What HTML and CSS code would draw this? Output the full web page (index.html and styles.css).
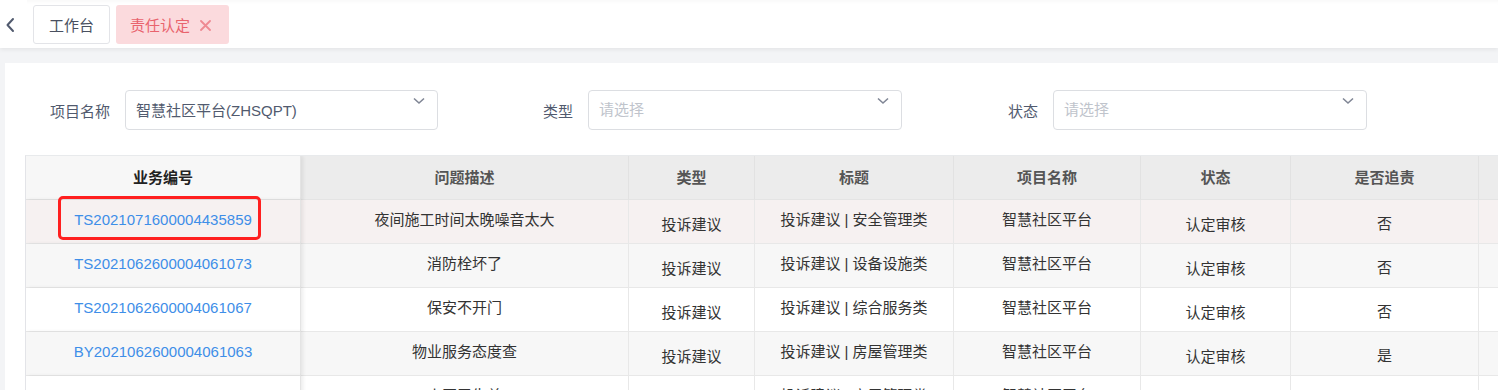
FILE: index.html
```html
<!DOCTYPE html>
<html lang="zh-CN">
<head>
<meta charset="utf-8">
<title>责任认定</title>
<link rel="stylesheet" href="styles.css">
</head>
<body>
<div class="topbar">
  <div class="back">
    <svg width="10" height="16" viewBox="0 0 10 16"><path d="M8 2 L2.5 8 L8 14" fill="none" stroke="#515a6e" stroke-width="2" stroke-linecap="round" stroke-linejoin="round"/></svg>
  </div>
  <div class="tabs">
    <div class="tab">工作台</div>
    <div class="tab active">责任认定<svg class="close" width="11" height="11" viewBox="0 0 11 11"><path d="M1 1 L10 10 M10 1 L1 10" stroke="#ee8a92" stroke-width="1.8" stroke-linecap="round"/></svg></div>
  </div>
</div>
<div class="main">
  <div class="card">
    <div class="filters">
      <div class="field f1">
        <span class="label">项目名称</span>
        <div class="select s1"><span class="value">智慧社区平台(ZHSQPT)</span><svg class="arrow" width="12" height="8" viewBox="0 0 12 8"><path d="M1 1.5 L6 6 L11 1.5" fill="none" stroke="#808695" stroke-width="1.6"/></svg></div>
      </div>
      <div class="field f2">
        <span class="label">类型</span>
        <div class="select s2"><span class="placeholder">请选择</span><svg class="arrow" width="12" height="8" viewBox="0 0 12 8"><path d="M1 1.5 L6 6 L11 1.5" fill="none" stroke="#808695" stroke-width="1.6"/></svg></div>
      </div>
      <div class="field f3">
        <span class="label">状态</span>
        <div class="select s3"><span class="placeholder">请选择</span><svg class="arrow" width="12" height="8" viewBox="0 0 12 8"><path d="M1 1.5 L6 6 L11 1.5" fill="none" stroke="#808695" stroke-width="1.6"/></svg></div>
      </div>
    </div>
    <div class="table-wrap">
      <table class="grid">
        <colgroup>
          <col class="c0"><col class="c1"><col class="c2"><col class="c3"><col class="c4"><col class="c5"><col class="c6"><col class="c7">
        </colgroup>
        <thead>
          <tr>
            <th class="fixed">业务编号</th>
            <th>问题描述</th>
            <th>类型</th>
            <th>标题</th>
            <th>项目名称</th>
            <th>状态</th>
            <th>是否追责</th>
            <th></th>
          </tr>
        </thead>
        <tbody>
          <tr class="hover">
            <td class="fixed"><a class="link">TS2021071600004435859</a><span class="mark"></span></td>
            <td class="up">夜间施工时间太晚噪音太大</td>
            <td class="down">投诉建议</td>
            <td class="up">投诉建议 | 安全管理类</td>
            <td class="up">智慧社区平台</td>
            <td class="down">认定审核</td>
            <td class="mid">否</td>
            <td></td>
          </tr>
          <tr class="stripe">
            <td class="fixed"><a class="link">TS2021062600004061073</a></td>
            <td class="up">消防栓坏了</td>
            <td class="down">投诉建议</td>
            <td class="up">投诉建议 | 设备设施类</td>
            <td class="up">智慧社区平台</td>
            <td class="down">认定审核</td>
            <td class="mid">否</td>
            <td></td>
          </tr>
          <tr>
            <td class="fixed"><a class="link">TS2021062600004061067</a></td>
            <td class="up">保安不开门</td>
            <td class="down">投诉建议</td>
            <td class="up">投诉建议 | 综合服务类</td>
            <td class="up">智慧社区平台</td>
            <td class="down">认定审核</td>
            <td class="mid">否</td>
            <td></td>
          </tr>
          <tr class="stripe">
            <td class="fixed"><a class="link">BY2021062600004061063</a></td>
            <td class="up">物业服务态度查</td>
            <td class="down">投诉建议</td>
            <td class="up">投诉建议 | 房屋管理类</td>
            <td class="up">智慧社区平台</td>
            <td class="down">认定审核</td>
            <td class="mid">是</td>
            <td></td>
          </tr>
          <tr>
            <td class="fixed"><a class="link">TS2021062500004061059</a></td>
            <td class="up">小区卫生差</td>
            <td class="down">投诉建议</td>
            <td class="up">投诉建议 | 房屋管理类</td>
            <td class="up">智慧社区平台</td>
            <td class="down">认定审核</td>
            <td class="mid">否</td>
            <td></td>
          </tr>
        </tbody>
      </table>
    </div>
  </div>
</div>
</body>
</html>
```
FILE: styles.css
```css
* { box-sizing: border-box; }
html, body { margin: 0; padding: 0; }
body {
  width: 1498px;
  height: 390px;
  overflow: hidden;
  background: #f3f4f6;
  font-family: "Liberation Sans", "Noto Sans CJK SC", sans-serif;
  font-size: 15px;
  color: #333;
}
.topbar {
  height: 48px;
  background: #fff;
  display: flex;
  align-items: flex-start;
  box-shadow: 0 2px 4px rgba(0,0,0,0.06), inset 0 4px 4px -3px rgba(0,0,0,0.04);
  position: relative;
  z-index: 2;
}
.back {
  width: 27px;
  height: 48px;
  display: flex;
  align-items: center;
  justify-content: center;
  padding-right: 8px;
  padding-top: 2px;
  background: #fff;
}
.tabs {
  display: flex;
  gap: 6px;
  padding-top: 5px;
  padding-left: 6px;
}
.tab {
  height: 39px;
  padding: 0 15px;
  border: 1px solid #e3e4e8;
  border-radius: 3px;
  background: #fff;
  color: #495060;
  display: flex;
  align-items: center;
  font-size: 15px;
  width: 77px;
  justify-content: center;
}
.tab.active {
  width: 113px;
  border: none;
  background: #fbdadd;
  color: #e9636d;
  justify-content: flex-start;
  padding-left: 14px;
}
.close {
  margin-left: 10px;
  margin-top: 1px;
}
.main {
  padding: 15px 0 0 5px;
}
.card {
  background: #fff;
  height: 340px;
  padding: 27px 0 0 20px;
}
.filters {
  display: flex;
  align-items: center;
  height: 40px;
}
.field {
  display: flex;
  align-items: center;
}
.label {
  color: #515a6e;
  font-size: 15px;
}
.f1 { padding-left: 25px; }
.f1 .label { width: 75px; }
.f2 { margin-left: 105px; }
.f2 .label { width: 45px; }
.f3 { margin-left: 106px; }
.f3 .label { width: 45px; }
.select {
  position: relative;
  width: 313px;
  height: 40px;
  border: 1px solid #dcdee2;
  border-radius: 4px;
  display: flex;
  align-items: center;
  padding-left: 10px;
  padding-bottom: 1px;
}
.s1 { width: 313px; }
.s2 { width: 314px; }
.s3 { width: 314px; }
.value { color: #515a6e; }
.placeholder { color: #c0c4cc; padding-bottom: 2px; }
.arrow {
  position: absolute;
  right: 12px;
  top: 6px;
}
.table-wrap {
  margin-top: 25px;
  width: 1473px;
  overflow: hidden;
  border-top: 1px solid #e8eaec;
  border-left: 1px solid #e3e4e8;
}
.grid {
  table-layout: fixed;
  border-collapse: separate;
  border-spacing: 0;
  width: 1603px;
}
.c0 { width: 275px; }
.c1 { width: 328px; }
.c2 { width: 126px; }
.c3 { width: 199px; }
.c4 { width: 187px; }
.c5 { width: 150px; }
.c6 { width: 188px; }
.c7 { width: 150px; }
th {
  height: 44px;
  background: #ececec;
  color: #555;
  font-weight: bold;
  font-size: 15px;
  text-align: center;
  border-right: 1px solid #e2e2e2;
  border-bottom: 1px solid #e4e4e4;
  padding: 0 0 3px 0;
}
th.fixed {
  background: #f7f7f7;
  color: #222;
}
td {
  height: 44px;
  text-align: center;
  color: #333;
  border-right: 1px solid #e8e8e8;
  border-bottom: 1px solid #e8e8e8;
  padding: 0;
  white-space: nowrap;
  background: #fff;
}
.fixed {
  position: relative;
  z-index: 1;
  box-shadow: 2px 0 4px rgba(0,0,0,0.08);
  border-right: 1px solid #e4e4e4;
}
td.fixed { padding-bottom: 4px; }
tr.hover td { background: #f6f1f1; }
tr.stripe td { background: #f7f7f7; }
td.up { padding-bottom: 6px; }
td.down { padding-top: 4px; }
td.mid { padding-top: 1px; }
.link {
  color: #3e8ee8;
  font-size: 15px;
}
.mark {
  position: absolute;
  left: 32px;
  top: -4px;
  width: 203px;
  height: 44px;
  border: 3px solid #ff1f1f;
  border-radius: 5px;
}
```
